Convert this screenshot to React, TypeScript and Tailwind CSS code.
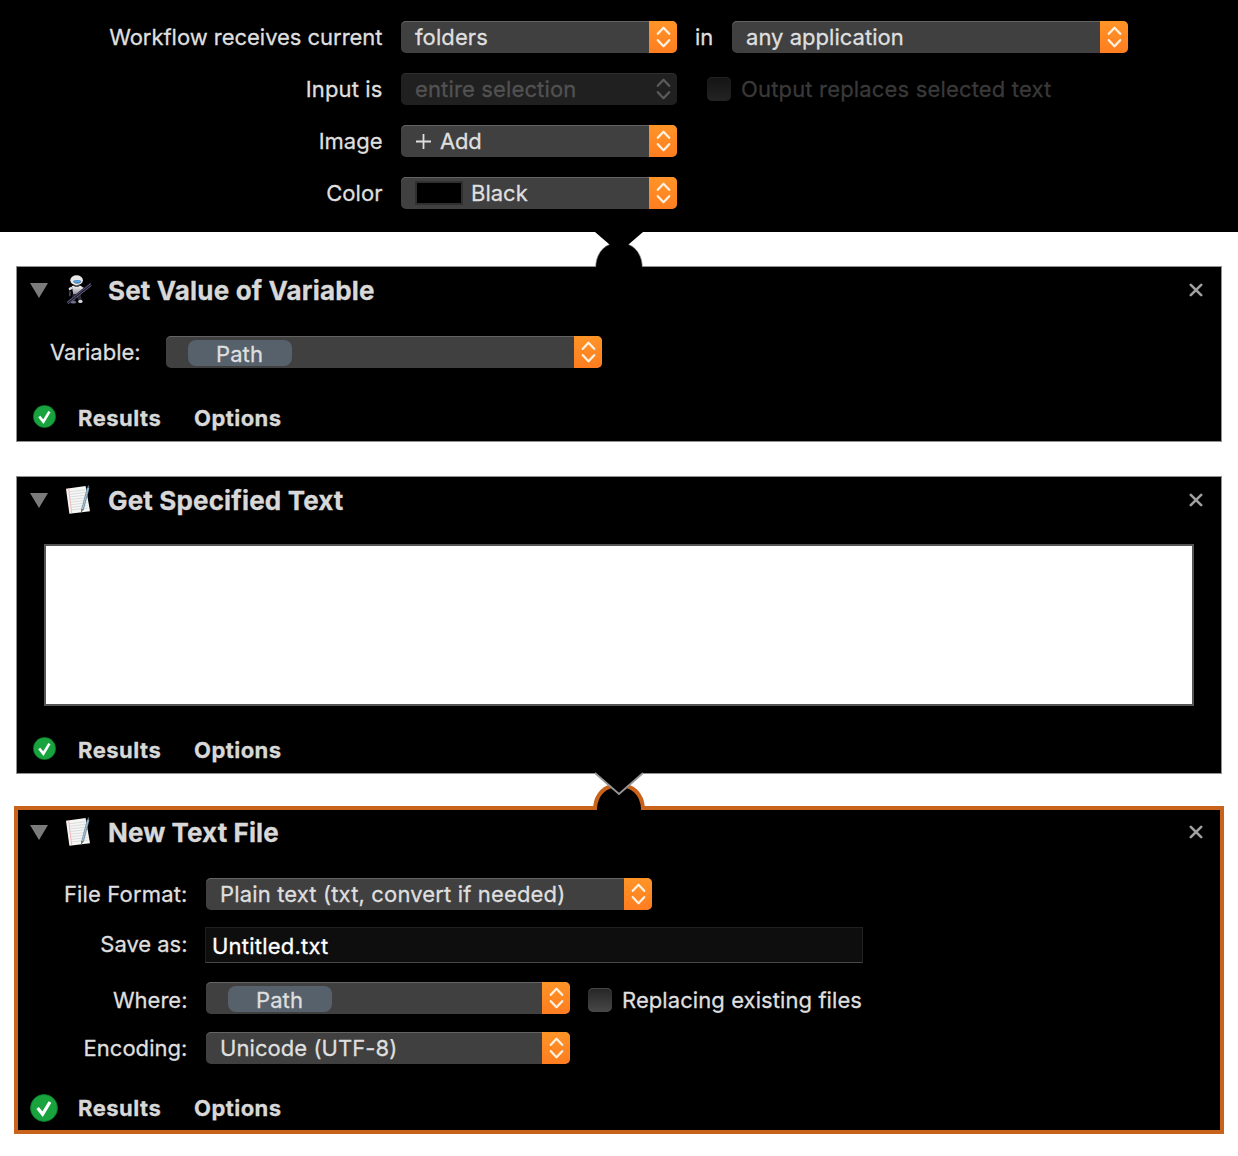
import type { ReactNode } from 'react';

function Chevrons({ color }: { color: string }) {
  return (
    <svg width="28" height="32" viewBox="0 0 28 32" fill="none" stroke={color} strokeWidth="2.3" strokeLinecap="round" strokeLinejoin="round">
      <path d="M8.8 12.8 14.5 6.8l5.7 6M8.8 19.2l5.700 6 5.700-6" />
    </svg>
  );
}

function Select({ width, disabled, children }: { width: string; disabled?: boolean; children: ReactNode }) {
  return (
    <div
      className={`${width} flex h-8 shrink-0 items-center justify-between overflow-hidden rounded-[5px] ${
        disabled ? 'bg-[#202020] text-[#525252] shadow-[inset_0_1px_0_#2e2e2e]' : 'bg-[#404040] text-[#dfdfdf] shadow-[inset_0_1px_0_#646464]'
      }`}
    >
      <div className="flex items-center whitespace-nowrap pl-[14px]">{children}</div>
      <div className={disabled ? 'h-8 w-7' : 'h-8 w-7 bg-linear-to-b from-[#ff9427] to-[#ff7d20]'}>
        <Chevrons color={disabled ? '#5a5a5a' : '#fff1df'} />
      </div>
    </div>
  );
}

function PathToken() {
  return (
    <span className="mt-[2px] ml-2 flex h-[26px] w-[104px] items-center justify-center rounded-[8px] bg-[#56616b] pt-[2px] pr-px tracking-[0.1px]">
      Path
    </span>
  );
}

function Checkbox({ disabled }: { disabled?: boolean }) {
  return (
    <span
      className={`size-6 shrink-0 rounded-[5px] bg-linear-to-b ${
        disabled ? 'from-[#141414] to-[#242424] shadow-[inset_0_1px_0_#222]' : 'from-[#262626] to-[#484848] shadow-[inset_0_1px_0_#454545]'
      }`}
    />
  );
}

function RobotIcon() {
  return (
    <svg width="28" height="30" viewBox="0 0 28 30">
      <defs>
        <linearGradient id="shell" x1="0" y1="0" x2="0" y2="1">
          <stop offset="0" stopColor="#fff" />
          <stop offset="1" stopColor="#8f8d9a" />
        </linearGradient>
      </defs>
      <path d="M6.4 11.4 3.6 13.2l.6 2.4 3.6-1.8zM15.5 11.2l3.4 1.6.6 3.4-2 .8-1.4-2.6z" fill="#dedde4" />
      <path d="M7 11.1q4.5-1.8 9.5 0l-1.2 8.4H8.2z" fill="url(#shell)" />
      <path d="M4.4 16l-.6 5 1.6.4.6-4.6z" fill="#4a4958" />
      <path d="M7.6 19.5l-1 6.5h3.4l1.4-5 2.4 5h3L15.6 18.6z" fill="#2c2c36" />
      <path d="M8.2 10.2h7l-1.6 1.6H9.8z" fill="#26262e" />
      <ellipse cx="11.6" cy="5.300" rx="6.3" ry="5" fill="#e9e9ea" />
      <path d="M8 6q4.300-2 8.400 0-.6 2.600-4 2.800-3.600-.2-4.400-2.800z" fill="#5c7690" />
      <path d="M8.800 5.900q3.400-1.200 6.800 0l-.8 1.300q-2.600.8-5.200 0z" fill="#4cadf6" />
      <ellipse cx="8.4" cy="27.2" rx="2.8" ry="1.3" fill="#77748c" />
      <ellipse cx="15.4" cy="26.4" rx="2.2" ry="1.6" fill="#d6d4df" />
      <path d="M2.3 28.2 25.8 9" stroke="#1b1a28" strokeWidth="3" />
      <path d="M2 27.4 26 8.4M3.2 28.8 26.4 10.6" stroke="#66638a" strokeWidth="0.9" />
    </svg>
  );
}

function PaperIcon() {
  return (
    <svg width="28" height="30" viewBox="0 0 28 30">
      <path d="M1 3.8 20.6.9 25 26.2 4.4 28.8z" fill="#f6f6f5" />
      <path d="M4.2 6.8l16.3-2.1M4.6 9.4l16.2-2.1M4.9 12l16.3-2M5.2 14.6l16.4-2M5.5 17.2l16.4-2M5.8 19.8l16.5-2M6.1 22.4l16.5-2M6.4 25l16.5-2" stroke="#cfd1d5" strokeWidth="0.7" />
      <path d="M3.6 3.5 6.7 28.4" stroke="#f0b0af" strokeWidth="0.9" />
      <path d="M23.2 2.8 17.4 25" stroke="#7590a6" strokeWidth="2.6" />
      <path d="M23.2 3 17.4 24.4" stroke="#a9c2d6" strokeWidth="1" />
      <path d="M18.4 24.6 15.8 28.4l.5-4.4z" fill="#666" />
      <path d="M22.1 2.5 23.6 0l.8 3z" fill="#64798b" />
    </svg>
  );
}

function StatusIcon({ large }: { large?: boolean }) {
  const size = large ? 28 : 23;
  return (
    <svg width={size} height={size} viewBox="0 0 28 28">
      <circle cx="14" cy="14" r="13.5" fill="#18a33f" stroke="#0d7a2c" strokeWidth="0.8" />
      <path d="M7.6 14 12.6 20.2 20 8" fill="none" stroke="#fff" strokeWidth="3.2" />
    </svg>
  );
}

function CardHeader({ icon, title, height, tracking, inset }: { icon: ReactNode; title: string; height: string; tracking: string; inset: string }) {
  return (
    <header className={`${height} ${inset} flex items-center`}>
      <svg width="18" height="15" viewBox="0 0 18 15" className="mb-px shrink-0">
        <path d="M0 0h18L9 15z" fill="#7b7b7b" />
      </svg>
      <div className="mb-[3px] ml-[17px] flex w-[43px]">{icon}</div>
      <h2 className={`${tracking} grow whitespace-nowrap text-[26px] font-bold text-[#d8d8d8]`}>{title}</h2>
      <svg width="14" height="14" viewBox="0 0 14 14" className="mb-[2px]">
        <path d="M1.8 1.8l10.4 10.4M12.2 1.8 1.8 12.2" stroke="#a0a0a0" strokeWidth="2.6" strokeLinecap="round" />
      </svg>
    </header>
  );
}

function CardFooter({ large }: { large?: boolean }) {
  return (
    <footer className={`${large ? 'h-11 pl-3' : 'h-[46px] pl-4'} mt-auto flex items-center text-[22px] font-bold text-[#d8d8d8]`}>
      <div className={large ? 'w-12' : 'mb-[3px] w-[45px]'}>
        <StatusIcon large={large} />
      </div>
      <span className="w-[116px] tracking-[0.5px]">Results</span>
      <span className="tracking-[0.45px]">Options</span>
    </footer>
  );
}

function Label({ width, tracking, children }: { width: string; tracking: string; children: string }) {
  return <span className={`${width} ${tracking} shrink-0 whitespace-nowrap text-right`}>{children}</span>;
}

export default function App() {
  return (
    <main className="h-[1156px] w-[1238px] overflow-hidden bg-white font-['Inter',sans-serif] text-[22px] leading-8 text-[#dfdfdf] [-webkit-text-stroke:0.3px]">
      <section className="relative flex h-[232px] flex-col gap-5 bg-black pt-[21px]">
        <div className="flex items-center">
          <Label width="w-[382.5px]" tracking="tracking-[-0.03px]">Workflow receives current</Label>
          <div className="w-[18.5px]" />
          <Select width="w-[276px]"><span className="tracking-[0.1px]">folders</span></Select>
          <span className="w-[55px] pl-[18px]">in</span>
          <Select width="w-[396px]"><span className="tracking-[0.03px]">any application</span></Select>
        </div>
        <div className="flex items-center">
          <Label width="w-[382.5px]" tracking="tracking-[0.12px]">Input is</Label>
          <div className="w-[18.5px]" />
          <Select width="w-[276px]" disabled><span className="tracking-[0.14px]">entire selection</span></Select>
          <div className="ml-[30px] flex items-center gap-[10px] text-[#393939]">
            <Checkbox disabled />
            <span className="tracking-[0.17px]">Output replaces selected text</span>
          </div>
        </div>
        <div className="flex items-center">
          <Label width="w-[382.5px]" tracking="tracking-[0px]">Image</Label>
          <div className="w-[18.5px]" />
          <Select width="w-[276px]">
            <svg width="17" height="17" viewBox="0 0 17 17" className="mr-2">
              <path d="M8.5 1v15M1 8.5h15" stroke="#dfdfdf" strokeWidth="1.8" />
            </svg>
            <span className="tracking-[-0.2px]">Add</span>
          </Select>
        </div>
        <div className="flex items-center">
          <Label width="w-[382.5px]" tracking="tracking-[0.05px]">Color</Label>
          <div className="w-[18.5px]" />
          <Select width="w-[276px]">
            <span className="mr-2 h-6 w-12 border-2 border-[#303030] bg-black" />
            <span className="tracking-[0px]">Black</span>
          </Select>
        </div>
        <svg width="54" height="37" viewBox="0 0 54 37" className="absolute top-[231px] left-[592px]">
          <path d="M3 0h48v1L36.500 13.500C44 16.500 49.700 24 50.300 36H3.700C4.300 24 10 16.500 17.500 13.500L3 1z" fill="#000" />
          <path d="M3.700 35.500C4.300 24 10 16.500 17.500 13.500M50.300 35.500C49.700 24 44 16.500 36.500 13.500" fill="none" stroke="#777" strokeWidth="0.7" />
        </svg>
      </section>

      <section className="relative mt-[34px] ml-4 flex h-[176px] w-[1206px] flex-col border border-[#8f9090] bg-black">
        <span className="absolute -top-px left-[579px] h-px w-[46px] bg-black" />
        <CardHeader icon={<RobotIcon />} title="Set Value of Variable" height="h-12" tracking="tracking-[0.16px]" inset="pl-[13px] pr-[18px]" />
        <div className="mt-[21px] flex items-center pl-[33px]">
          <span className="w-[116px] tracking-[0px]">Variable:</span>
          <Select width="w-[436px]"><PathToken /></Select>
        </div>
        <CardFooter />
      </section>

      <section className="relative z-10 mt-[34px] ml-4 flex h-[298px] w-[1206px] flex-col border border-[#8f9090] bg-black">
        <CardHeader icon={<PaperIcon />} title="Get Specified Text" height="h-12" tracking="tracking-[0.15px]" inset="pl-[13px] pr-[18px]" />
        <div className="mx-[27px] mt-[19px] h-[162px] border-2 border-[#555] bg-white" />
        <CardFooter />
        <svg width="54" height="26" viewBox="0 0 54 26" className="absolute top-[295px] left-[575px]">
          <path d="M3 0h48v1L27 22 3 1z" fill="#000" />
          <path d="M3 1l24 21L51 1" fill="none" stroke="#969696" strokeWidth="1.8" />
        </svg>
      </section>

      <section className="relative mt-8 ml-[14px] flex h-[328px] w-[1210px] flex-col border-4 border-[#c8631b] bg-black">
        <svg width="54" height="28" viewBox="0 0 54 28" className="absolute top-[-27px] left-[574px]">
          <path d="M3 28V25C4 11 13 2 27 2s23 9 24 23v3z" fill="#000" />
          <path d="M3 27V25C4 11 13 2 27 2s23 9 24 23v2" fill="none" stroke="#c8631b" strokeWidth="4" />
        </svg>
        <CardHeader icon={<PaperIcon />} title="New Text File" height="h-[46px]" tracking="tracking-[0.1px]" inset="pl-3 pr-[17px]" />
        <div className="mt-[22px] flex items-center">
          <Label width="w-[169.5px]" tracking="tracking-[0.15px]">File Format:</Label>
          <div className="w-[18.5px]" />
          <Select width="w-[446px]"><span className="tracking-[0.15px]">Plain text (txt, convert if needed)</span></Select>
        </div>
        <div className="mt-[17px] flex">
          <div className="mt-px flex h-8"><Label width="w-[169.5px]" tracking="tracking-[-0.03px]">Save as:</Label></div>
          <div className="ml-[17.5px] flex h-9 w-[658px] items-center border border-[#202020] border-b-[#484848] bg-[#0e0e0e] pt-[2px] pl-[6px] tracking-[0.22px] text-white">
            Untitled.txt
          </div>
        </div>
        <div className="mt-[19px] flex h-8 items-center">
          <div className="mt-[4px] flex"><Label width="w-[169.5px]" tracking="tracking-[0px]">Where:</Label></div>
          <div className="w-[18.5px]" />
          <Select width="w-[364px]"><PathToken /></Select>
          <div className="mt-1 ml-[18px] flex items-center gap-[10px]">
            <Checkbox />
            <span className="tracking-[0.08px]">Replacing existing files</span>
          </div>
        </div>
        <div className="mt-[18px] flex items-center">
          <Label width="w-[169.5px]" tracking="tracking-[0.05px]">Encoding:</Label>
          <div className="w-[18.5px]" />
          <Select width="w-[364px]"><span className="tracking-[0.07px]">Unicode (UTF-8)</span></Select>
        </div>
        <CardFooter large />
      </section>
    </main>
  );
}
